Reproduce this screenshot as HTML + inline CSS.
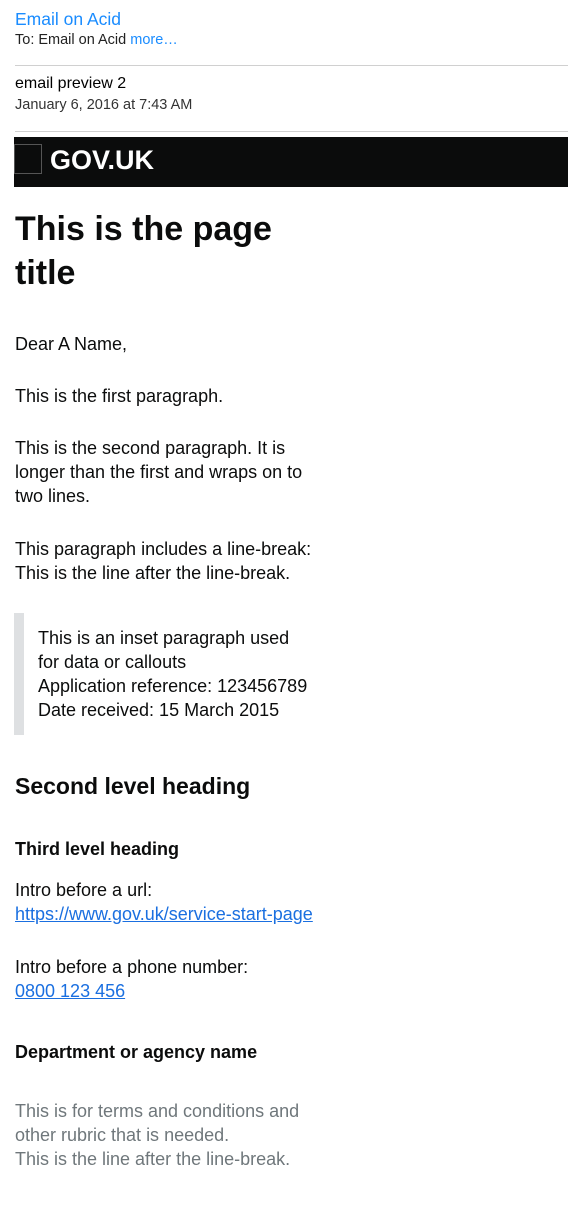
<!DOCTYPE html>
<html><head><style>
body{margin:0;width:568px;height:1220px;background:#fff;font-family:"Liberation Sans",Arial,sans-serif;color:#0b0c0c;position:relative;overflow:hidden}
.a{position:absolute;left:15px;white-space:nowrap}
.p{font-size:18px;line-height:24px}
a{color:#1a6fe0;text-decoration:underline}
.hr{position:absolute;left:15px;right:0;height:1px;background:#d0d0d0}
</style></head><body>
<div class="a" style="top:8px;font-size:17.5px;line-height:22px;color:#1a8cff">Email on Acid</div>
<div class="a" style="top:30px;font-size:14.5px;line-height:20px;color:#222">To: Email on Acid <span style="color:#1a8cff">more…</span></div>
<div class="hr" style="top:65px"></div>
<div class="a" style="top:74px;font-size:16px;line-height:20px;color:#000">email preview 2</div>
<div class="a" style="top:95px;font-size:14.5px;line-height:20px;color:#333">January 6, 2016 at 7:43 AM</div>
<div class="hr" style="top:131px"></div>
<div style="position:absolute;left:14px;right:0;top:137px;height:50px;background:#0b0c0c"></div>
<div style="position:absolute;left:14px;top:144px;width:28px;height:30px;border:1px solid #555;box-sizing:border-box"></div>
<div class="a" style="left:50px;top:143px;font-size:27px;line-height:34px;font-weight:bold;color:#fff">GOV.UK</div>
<div class="a" style="top:207px;font-size:34px;line-height:44px;font-weight:bold">This is the page<br>title</div>
<div class="a p" style="top:332px">Dear A Name,</div>
<div class="a p" style="top:384px">This is the first paragraph.</div>
<div class="a p" style="top:436px">This is the second paragraph. It is<br>longer than the first and wraps on to<br>two lines.</div>
<div class="a p" style="top:537px">This paragraph includes a line-break:<br>This is the line after the line-break.</div>
<div style="position:absolute;left:14px;top:613px;width:10px;height:122px;background:#dee0e2"></div>
<div class="a p" style="left:38px;top:626px">This is an inset paragraph used<br>for data or callouts<br>Application reference: 123456789<br>Date received: 15 March 2015</div>
<div class="a" style="top:771px;font-size:23px;line-height:30px;font-weight:bold">Second level heading</div>
<div class="a p" style="top:837px;font-weight:bold">Third level heading</div>
<div class="a p" style="top:878px">Intro before a url:<br><a>https://www.gov.uk/service-start-page</a></div>
<div class="a p" style="top:955px">Intro before a phone number:<br><a>0800 123 456</a></div>
<div class="a p" style="top:1040px;font-weight:bold">Department or agency name</div>
<div class="a p" style="top:1099px;color:#6f777b">This is for terms and conditions and<br>other rubric that is needed.<br>This is the line after the line-break.</div>
</body></html>
